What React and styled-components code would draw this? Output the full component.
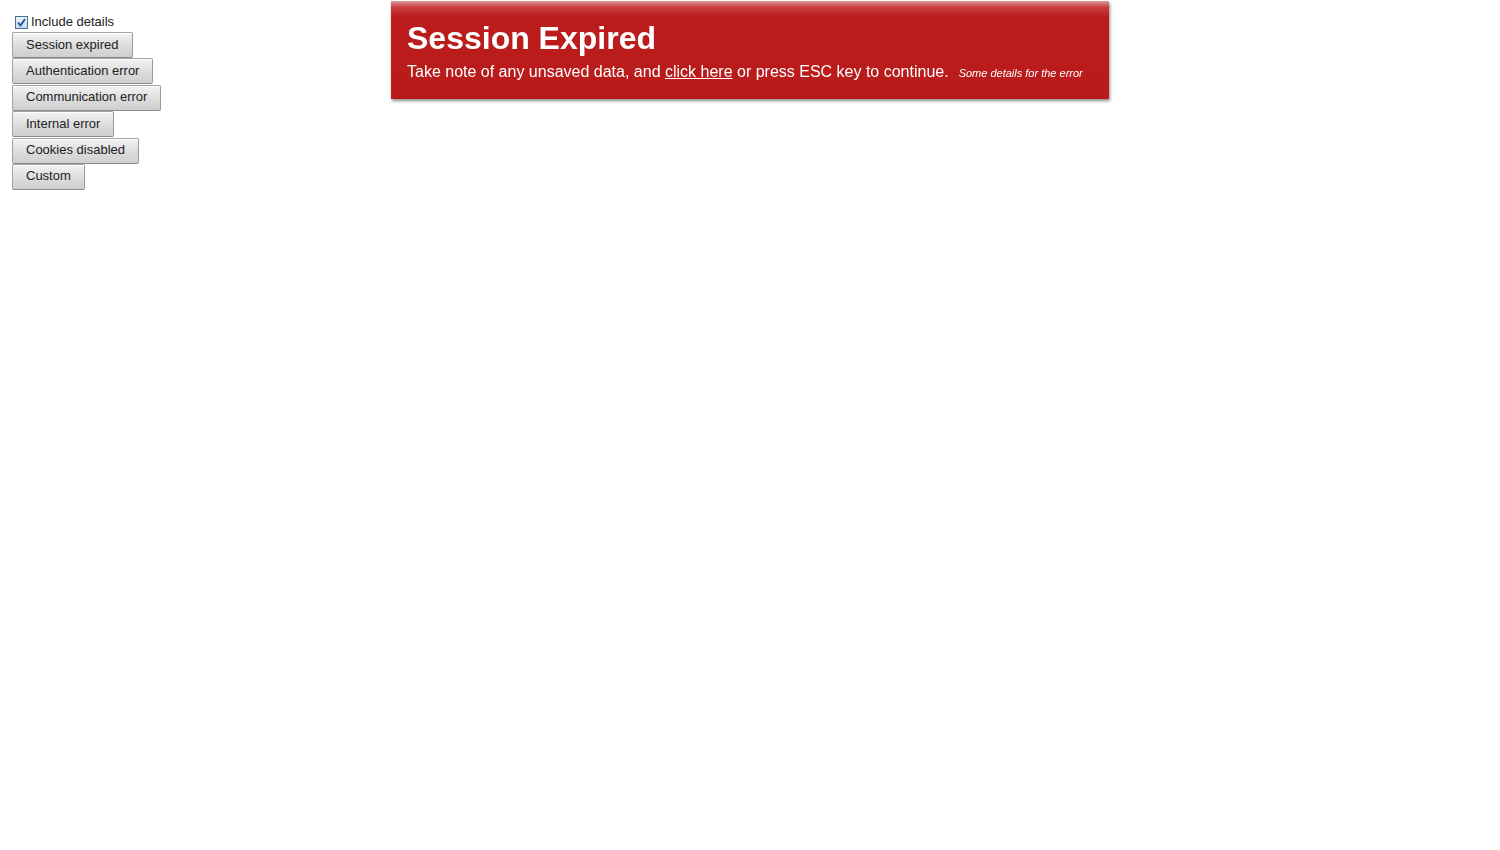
import React from "react";
import styled, { createGlobalStyle } from "styled-components";

const Global = createGlobalStyle`
  html, body { margin: 0; padding: 0; background: #fff; }
  body { font-family: "Liberation Sans", Arial, sans-serif; color: #222; }
`;

const Page = styled.div`
  padding: 14px 0 0 12px;
  display: flex;
  flex-direction: column;
  align-items: flex-start;
`;

const CheckRow = styled.label`
  display: flex;
  align-items: center;
  gap: 3px;
  margin-left: 3px;
  height: 15px;
  margin-bottom: 3px;
  font-size: 13px;
  color: #222;
`;

const CheckBox = styled.span`
  width: 11px;
  height: 11px;
  margin-top: 2px;
  border: 1px solid #4b6d94;
  background: linear-gradient(#e9f2fb, #c9dcef);
  display: flex;
  align-items: center;
  justify-content: center;
`;

const Buttons = styled.div`
  display: flex;
  flex-direction: column;
  align-items: flex-start;
  gap: 0.4px;
`;

const Button = styled.button`
  height: 26px;
  padding: 0 13px 2px;
  font-family: "Liberation Sans", Arial, sans-serif;
  font-size: 13px;
  color: #222;
  border: 1px solid #a3a3a3;
  border-bottom-color: #8a8a8a;
  border-right-color: #9a9a9a;
  border-radius: 2px;
  background: linear-gradient(#f3f3f3, #dcdcdc 55%, #cfcfcf);
  box-shadow: inset 0 1px 0 #fff;
  cursor: pointer;
`;

const Notification = styled.div`
  position: fixed;
  top: 1px;
  left: 50%;
  transform: translateX(-50%);
  width: 718px;
  height: 98px;
  box-sizing: border-box;
  padding: 19px 16px 0;
  background: linear-gradient(#dc9a9a 0px, #c84040 6px, #bb1c1c 16px, #b91a1a 100%);
  box-shadow: 1px 2px 3px rgba(0, 0, 0, 0.45);
  color: #fff;
`;

const Caption = styled.div`
  font-size: 32px;
  line-height: 36px;
  font-weight: bold;
`;

const Message = styled.div`
  margin-top: 6px;
  font-size: 16px;
  line-height: 20px;
`;

const Link = styled.a`
  color: #fff;
  text-decoration: underline;
`;

const Details = styled.i`
  font-size: 11px;
  margin-left: 10px;
`;

export default function App() {
  const buttons = [
    "Session expired",
    "Authentication error",
    "Communication error",
    "Internal error",
    "Cookies disabled",
    "Custom",
  ];
  return (
    <>
      <Global />
      <Page>
        <CheckRow>
          <CheckBox>
            <svg width="9" height="9" viewBox="0 0 9 9">
              <path d="M1 4.5 L3.5 7.5 L8 1" fill="none" stroke="#1d4f9a" strokeWidth="1.8" />
            </svg>
          </CheckBox>
          Include details
        </CheckRow>
        <Buttons>
          {buttons.map((b) => (
            <Button key={b}>{b}</Button>
          ))}
        </Buttons>
      </Page>
      <Notification>
        <Caption>Session Expired</Caption>
        <Message>
          Take note of any unsaved data, and <Link href="#">click here</Link> or press ESC key to continue.
          <Details>Some details for the error</Details>
        </Message>
      </Notification>
    </>
  );
}
